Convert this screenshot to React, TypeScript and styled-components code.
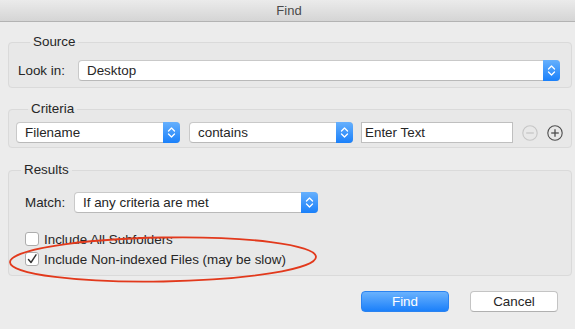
import React from "react";
import styled, { createGlobalStyle } from "styled-components";

const Global = createGlobalStyle`
  html, body { margin: 0; padding: 0; background: #ececec; }
  body { font-family: "Liberation Sans", Arial, sans-serif; font-size: 13.4px; color: #262626; }
  * { box-sizing: border-box; }
`;

const Window = styled.div`
  position: relative;
  width: 575px;
  height: 329px;
  background: #ececec;
  overflow: hidden;
  display: flex;
  flex-direction: column;
`;

const TitleBar = styled.div`
  height: 22px;
  flex: none;
  display: flex;
  align-items: center;
  justify-content: center;
  background: linear-gradient(#ebebeb, #d5d5d5);
  border-bottom: 1px solid #b3b3b3;
  color: #4a4a4a;
  font-size: 13px;
  padding-left: 3px;
`;

const Body = styled.div`
  display: flex;
  flex-direction: column;
  padding: 12px 3px 0 8px;
`;

const Group = styled.fieldset<{ $pt: number; $pb: number; $pl: number; $mt?: number }>`
  margin: ${(p) => p.$mt ?? 0}px 0 0 0;
  border: 1px solid #dadada;
  border-radius: 4px;
  background: #e8e8e8;
  padding: ${(p) => p.$pt}px 11px ${(p) => p.$pb}px ${(p) => p.$pl}px;
  min-width: 0;
`;

const Legend = styled.legend`
  margin-left: 12px;
  padding: 0 3px;
  line-height: 16px;
  font-size: 13.4px;
  color: #262626;
`;

const Row = styled.div<{ $pl?: number; $pr?: number }>`
  display: flex;
  align-items: center;
  padding-left: ${(p) => p.$pl ?? 0}px;
  padding-right: ${(p) => p.$pr ?? 0}px;
`;

const Spacer = styled.span<{ $w: number }>`
  width: ${(p) => p.$w}px;
  flex: none;
`;

const Label = styled.span<{ $w: number }>`
  width: ${(p) => p.$w}px;
  flex: none;
  white-space: nowrap;
`;

const Select = styled.div<{ $w?: number }>`
  position: relative;
  height: 21px;
  ${(p) => (p.$w ? `width: ${p.$w}px; flex: none;` : "flex: 1;")}
  background: #fff;
  border: 1px solid #c9c9c9;
  border-bottom-color: #b9b9b9;
  border-radius: 4px;
  display: flex;
  align-items: center;
  padding-left: 8px;
  padding-right: 17px;
  color: #262626;
  white-space: nowrap;
`;

const Stepper = styled.div`
  position: absolute;
  top: -1px;
  right: -1px;
  bottom: -1px;
  width: 17px;
  border-radius: 0 4px 4px 0;
  background: linear-gradient(#66b0fd, #1a80fa);
  display: flex;
  align-items: center;
  justify-content: center;
`;

const TextField = styled.div`
  width: 152px;
  height: 21px;
  flex: none;
  background: #fff;
  border: 1px solid #bfbfbf;
  display: flex;
  align-items: center;
  padding-left: 3px;
  color: #262626;
`;

const CircleBtn = styled.div<{ $disabled?: boolean }>`
  width: 16px;
  height: 16px;
  flex: none;
  display: flex;
  align-items: center;
  justify-content: center;
  color: ${(p) => (p.$disabled ? "#c6c6c6" : "#4e4e4e")};
`;

const CheckRow = styled.label`
  display: flex;
  align-items: center;
  gap: 5px;
  height: 20px;
  padding-left: 16px;
  white-space: nowrap;
`;

const Box = styled.span`
  width: 14px;
  height: 14px;
  flex: none;
  background: #fff;
  border: 1px solid #adadad;
  border-radius: 3px;
  display: flex;
  align-items: center;
  justify-content: center;
`;

const Checks = styled.div`
  display: flex;
  flex-direction: column;
  margin-top: 16px;
`;

const Footer = styled.div`
  display: flex;
  justify-content: flex-end;
  gap: 21px;
  padding: 15px 17px 0 0;
`;

const Button = styled.div<{ $primary?: boolean }>`
  width: 88px;
  height: 21px;
  border-radius: 4px;
  display: flex;
  align-items: center;
  justify-content: center;
  font-size: 13.4px;
  ${(p) =>
    p.$primary
      ? `background: linear-gradient(#6ab2fd, #1b80fa); color: #fff; border: 1px solid #2b83f0;`
      : `background: #fff; color: #262626; border: 1px solid #c4c4c4; border-bottom-color: #b0b0b0;`}
`;

const Annotation = styled.svg`
  position: absolute;
  left: 0;
  top: 0;
  pointer-events: none;
`;

const Chevrons = () => (
  <svg width="9" height="13" viewBox="0 0 9 13">
    <path d="M1.5 5 L4.5 2 L7.5 5" fill="none" stroke="#fff" strokeWidth="1.3" strokeLinecap="round" strokeLinejoin="round" />
    <path d="M1.5 8 L4.5 11 L7.5 8" fill="none" stroke="#fff" strokeWidth="1.3" strokeLinecap="round" strokeLinejoin="round" />
  </svg>
);

const SelectBox = ({ value, w }: { value: string; w?: number }) => (
  <Select $w={w}>
    {value}
    <Stepper>
      <Chevrons />
    </Stepper>
  </Select>
);

const PlusMinus = ({ plus }: { plus?: boolean }) => (
  <CircleBtn $disabled={!plus}>
    <svg width="16" height="16" viewBox="0 0 16 16">
      <circle cx="8" cy="8" r="7.2" fill="none" stroke="currentColor" strokeWidth="1.1" />
      <path d="M4.2 8 H11.8" stroke="currentColor" strokeWidth="1.3" />
      {plus && <path d="M8 4.2 V11.8" stroke="currentColor" strokeWidth="1.3" />}
    </svg>
  </CircleBtn>
);

export default function App() {
  return (
    <>
      <Global />
      <Window>
        <TitleBar>Find</TitleBar>
        <Body>
          <Group $pt={10} $pb={6} $pl={9}>
            <Legend>Source</Legend>
            <Row>
              <Label $w={60}>Look in:</Label>
              <SelectBox value="Desktop" />
            </Row>
          </Group>
          <Group $pt={5} $pb={4} $pl={7} $mt={13}>
            <Legend>Criteria</Legend>
            <Row>
              <SelectBox value="Filename" w={164} />
              <Spacer $w={9} />
              <SelectBox value="contains" w={164} />
              <Spacer $w={8} />
              <TextField>Enter Text</TextField>
              <Spacer $w={9} />
              <PlusMinus />
              <Spacer $w={9} />
              <PlusMinus plus />
            </Row>
          </Group>
          <Group $pt={14} $pb={6} $pl={0} $mt={14}>
            <Legend>Results</Legend>
            <Row $pl={16} $pr={242}>
              <Label $w={49}>Match:</Label>
              <SelectBox value="If any criteria are met" />
            </Row>
            <Checks>
              <CheckRow>
                <Box />
                Include All Subfolders
              </CheckRow>
              <CheckRow>
                <Box>
                  <svg width="10" height="10" viewBox="0 0 10 10">
                    <path d="M1.5 5.5 L4 8.5 L9 0.8" fill="none" stroke="#333" strokeWidth="1.4" strokeLinecap="round" strokeLinejoin="round" />
                  </svg>
                </Box>
                Include Non-indexed Files (may be slow)
              </CheckRow>
            </Checks>
          </Group>
        </Body>
        <Footer>
          <Button $primary>Find</Button>
          <Button>Cancel</Button>
        </Footer>
        <Annotation width="575" height="329" viewBox="0 0 575 329">
          <ellipse cx="163" cy="259.5" rx="153" ry="22" transform="rotate(-1 163 259.5)" fill="none" stroke="#e2391c" strokeWidth="1.8" />
        </Annotation>
      </Window>
    </>
  );
}
